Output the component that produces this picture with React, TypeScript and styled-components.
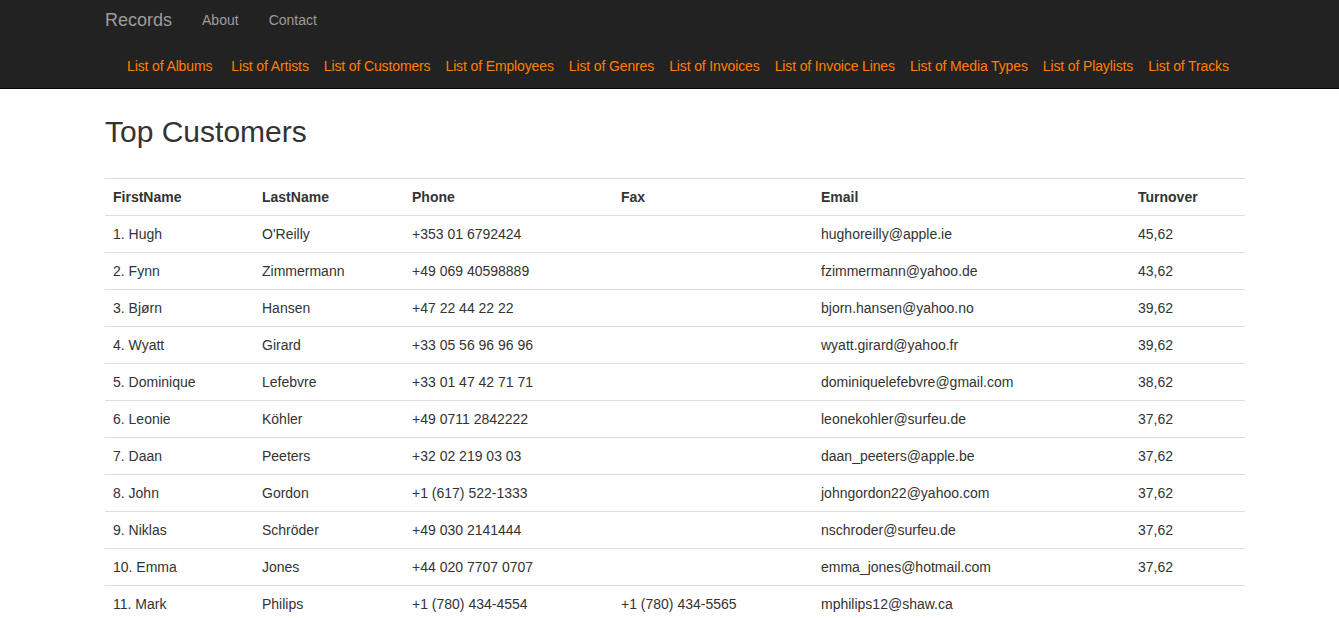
import { createGlobalStyle } from 'styled-components';
import styled from 'styled-components';

const GlobalStyle = createGlobalStyle`
  html, body {
    margin: 0;
    padding: 0;
    background: #fff;
  }
  body {
    font-family: "Liberation Sans", Arial, Helvetica, sans-serif;
    font-size: 14px;
    line-height: 20px;
    color: #333;
  }
`;

const Navbar = styled.nav`
  background: #222;
  border-bottom: 1px solid #080808;
`;

const Container = styled.div`
  box-sizing: border-box;
  width: 1181px;
  margin: 0 auto;
  padding: 0 15px 0 26px;
`;

const TopRow = styled.div`
  display: flex;
  align-items: center;
  height: 40px;
`;

const Brand = styled.a`
  font-size: 18px;
  line-height: 20px;
  color: #9d9d9d;
  padding-right: 15px;
  text-decoration: none;
`;

const NavLink = styled.a`
  color: #9d9d9d;
  padding: 0 15px;
  text-decoration: none;
`;

const SubNav = styled.ul`
  display: flex;
  gap: 15px;
  list-style: none;
  margin: 0;
  padding: 16px 0 12px 22px;
`;

const SubItem = styled.li<{ $extra?: boolean }>`
  margin-right: ${p => (p.$extra ? '4px' : '0')};
  a {
    color: #ff8000;
    text-decoration: none;
    white-space: nowrap;
    letter-spacing: -0.13px;
  }
`;

const Title = styled.h2`
  font-size: 30px;
  font-weight: 500;
  line-height: 33px;
  margin: 26px 0 30px;
  color: #333;
`;

const Table = styled.table`
  width: 100%;
  border-collapse: collapse;
  table-layout: fixed;
`;

const Th = styled.th`
  text-align: left;
  font-weight: bold;
  padding: 8px;
  line-height: 20px;
  border-top: 1px solid #ddd;
  border-bottom: 1px solid #ddd;
`;

const Td = styled.td`
  padding: 8px;
  line-height: 20px;
  border-top: 1px solid #ddd;
  white-space: nowrap;
`;

const columns = [
  { label: 'FirstName', width: 149 },
  { label: 'LastName', width: 150 },
  { label: 'Phone', width: 209 },
  { label: 'Fax', width: 200 },
  { label: 'Email', width: 317 },
  { label: 'Turnover', width: 115 },
];

const links = [
  'List of Albums',
  'List of Artists',
  'List of Customers',
  'List of Employees',
  'List of Genres',
  'List of Invoices',
  'List of Invoice Lines',
  'List of Media Types',
  'List of Playlists',
  'List of Tracks',
];

const customers = [
  ['Hugh', "O'Reilly", '+353 01 6792424', '', 'hughoreilly@apple.ie', '45,62'],
  ['Fynn', 'Zimmermann', '+49 069 40598889', '', 'fzimmermann@yahoo.de', '43,62'],
  ['Bjørn', 'Hansen', '+47 22 44 22 22', '', 'bjorn.hansen@yahoo.no', '39,62'],
  ['Wyatt', 'Girard', '+33 05 56 96 96 96', '', 'wyatt.girard@yahoo.fr', '39,62'],
  ['Dominique', 'Lefebvre', '+33 01 47 42 71 71', '', 'dominiquelefebvre@gmail.com', '38,62'],
  ['Leonie', 'Köhler', '+49 0711 2842222', '', 'leonekohler@surfeu.de', '37,62'],
  ['Daan', 'Peeters', '+32 02 219 03 03', '', 'daan_peeters@apple.be', '37,62'],
  ['John', 'Gordon', '+1 (617) 522-1333', '', 'johngordon22@yahoo.com', '37,62'],
  ['Niklas', 'Schröder', '+49 030 2141444', '', 'nschroder@surfeu.de', '37,62'],
  ['Emma', 'Jones', '+44 020 7707 0707', '', 'emma_jones@hotmail.com', '37,62'],
  ['Mark', 'Philips', '+1 (780) 434-4554', '+1 (780) 434-5565', 'mphilips12@shaw.ca', ''],
];

export default function App() {
  return (
    <>
      <GlobalStyle />
      <Navbar>
        <Container>
          <TopRow>
            <Brand href="#">Records</Brand>
            <NavLink href="#">About</NavLink>
            <NavLink href="#">Contact</NavLink>
          </TopRow>
          <SubNav>
            {links.map((l, i) => (
              <SubItem key={l} $extra={i === 0}>
                <a href="#">{l}</a>
              </SubItem>
            ))}
          </SubNav>
        </Container>
      </Navbar>
      <Container>
        <Title>Top Customers</Title>
        <Table>
          <colgroup>
            {columns.map(c => (
              <col key={c.label} style={{ width: c.width }} />
            ))}
          </colgroup>
          <thead>
            <tr>
              {columns.map(c => (
                <Th key={c.label}>{c.label}</Th>
              ))}
            </tr>
          </thead>
          <tbody>
            {customers.map((c, i) => (
              <tr key={i}>
                <Td>
                  {i + 1}. {c[0]}
                </Td>
                <Td>{c[1]}</Td>
                <Td>{c[2]}</Td>
                <Td>{c[3]}</Td>
                <Td>{c[4]}</Td>
                <Td>{c[5]}</Td>
              </tr>
            ))}
          </tbody>
        </Table>
      </Container>
    </>
  );
}
